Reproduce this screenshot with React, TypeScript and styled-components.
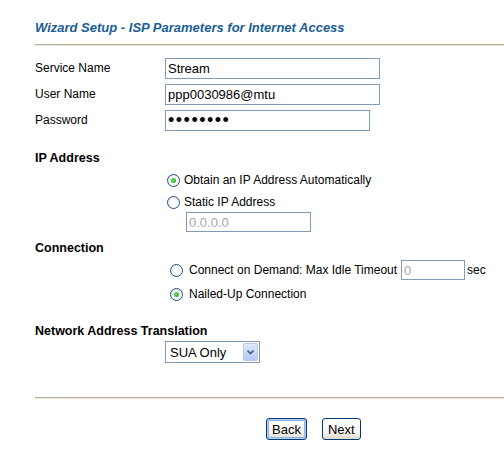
import React from 'react'
import styled, { createGlobalStyle } from 'styled-components'

const GlobalStyle = createGlobalStyle`
  html, body {
    margin: 0;
    padding: 0;
    background: #ffffff;
  }
  body {
    font-family: 'Liberation Sans', Arial, sans-serif;
    font-size: 12px;
    color: #000000;
  }
`

const Page = styled.div`
  width: 504px;
  height: 475px;
  padding-left: 35px;
  box-sizing: border-box;
  overflow: hidden;
`

const Title = styled.h1`
  margin: 0;
  padding-top: 20px;
  height: 24px;
  font-size: 13px;
  font-weight: bold;
  font-style: italic;
  color: #1b5d95;
  line-height: 16px;
`

const Rule = styled.div<{ $top: number }>`
  margin-top: ${(p) => p.$top}px;
  height: 1px;
  border-top: 1px solid #b3ad98;
  background: #ece9d8;
`

const FieldRow = styled.div`
  display: grid;
  grid-template-columns: 130px auto;
  align-items: center;
  height: 26px;
`

const Fields = styled.div`
  margin-top: 9px;
`

const Label = styled.span`
  font-size: 12px;
`

const TextBox = styled.input<{ $width: number }>`
  width: ${(p) => p.$width}px;
  height: 21px;
  box-sizing: border-box;
  border: 1px solid #7f9db9;
  padding: 0 2px;
  font-family: 'Liberation Sans', Arial, sans-serif;
  font-size: 13px;
  color: #000;
  outline: none;
  &:disabled {
    background: #ffffff;
    color: #a8a8a0;
  }
`

const PasswordBox = styled(TextBox)`
  font-size: 18px;
  letter-spacing: 1.5px;
`

const SectionHeading = styled.div<{ $top: number }>`
  margin-top: ${(p) => p.$top}px;
  height: 16px;
  line-height: 16px;
  font-weight: bold;
  font-size: 12.5px;
`

const OptionList = styled.div<{ $indent: number; $top: number; $gap: number }>`
  display: flex;
  flex-direction: column;
  gap: ${(p) => p.$gap}px;
  margin-top: ${(p) => p.$top}px;
  padding-left: ${(p) => p.$indent}px;
`

const Option = styled.label<{ $gap: number }>`
  display: flex;
  align-items: center;
  gap: ${(p) => p.$gap}px;
  height: 16px;
  font-size: 12px;
  white-space: nowrap;
`

const Radio = styled.input.attrs({ type: 'radio' })`
  appearance: none;
  margin: 0;
  width: 13px;
  height: 13px;
  border-radius: 50%;
  border: 1px solid #1c5180;
  box-sizing: border-box;
  background: radial-gradient(circle at 65% 65%, #ffffff 0%, #ffffff 40%, #dcdad0 100%);
  display: grid;
  place-items: center;
  &:checked::after {
    content: '';
    width: 5px;
    height: 5px;
    border-radius: 50%;
    background: radial-gradient(circle at 40% 40%, #5ee25e, #21a121);
  }
`

const SubField = styled.div`
  margin-top: 2px;
  padding-left: 151px;
`

const SmallBox = styled(TextBox)<{ $gapLeft?: number }>`
  height: 20px;
  margin: 0 2px 0 ${(p) => p.$gapLeft ?? 0}px;
`

const DemandRow = styled.div`
  display: flex;
  align-items: center;
  height: 20px;
  margin-top: -2px;
  margin-bottom: -2px;
`

const SelectWrap = styled.div`
  margin-top: 2px;
  margin-left: 130px;
  width: 95px;
  height: 22px;
  box-sizing: border-box;
  border: 1px solid #7f9db9;
  display: flex;
  align-items: center;
  padding: 1px;
`

const SelectText = styled.span`
  flex: 1;
  padding-left: 3px;
  font-size: 13px;
`

const ArrowButton = styled.span`
  width: 15px;
  height: 18px;
  border-radius: 2px;
  border: 1px solid #b9c9ef;
  box-sizing: border-box;
  background: linear-gradient(#e1e9fc, #b4c8f6);
  display: flex;
  align-items: center;
  justify-content: center;
`

const ButtonBar = styled.div`
  display: flex;
  gap: 15px;
  margin-top: 19px;
  padding-left: 231px;
`

const XpButton = styled.button<{ $isDefault?: boolean }>`
  height: 22px;
  padding: 0 5px;
  border: 1px solid #003c74;
  border-radius: 3px;
  background: linear-gradient(#ffffff, #f4f3ee 70%, #dcd8c8);
  font-family: 'Liberation Sans', Arial, sans-serif;
  font-size: 13px;
  color: #000;
  box-shadow: ${(p) =>
    p.$isDefault ? 'inset 0 0 0 1px #b6cdf6, inset 0 0 0 2px #8eb2ef' : 'none'};
`

const ChevronDown = () => (
  <svg width="7" height="5" viewBox="0 0 7 5">
    <path d="M0.5 0.5 L3.5 3.5 L6.5 0.5" fill="none" stroke="#4d6185" strokeWidth="1.6" />
  </svg>
)

export default function App() {
  return (
    <Page>
      <GlobalStyle />
      <Title>Wizard Setup - ISP Parameters for Internet Access</Title>
      <Rule $top={0} />

      <Fields>
        <FieldRow>
          <Label>Service Name</Label>
          <TextBox $width={215} defaultValue="Stream" />
        </FieldRow>
        <FieldRow>
          <Label>User Name</Label>
          <TextBox $width={215} defaultValue="ppp0030986@mtu" />
        </FieldRow>
        <FieldRow>
          <Label>Password</Label>
          <PasswordBox $width={205} type="password" defaultValue="secretpw" />
        </FieldRow>
      </Fields>

      <SectionHeading $top={17}>IP Address</SectionHeading>
      <OptionList $indent={132} $top={6} $gap={6}>
        <Option $gap={4}>
          <Radio name="ip" defaultChecked />
          Obtain an IP Address Automatically
        </Option>
        <Option $gap={4}>
          <Radio name="ip" />
          Static IP Address
        </Option>
      </OptionList>
      <SubField>
        <SmallBox $width={125} disabled defaultValue="0.0.0.0" />
      </SubField>

      <SectionHeading $top={8}>Connection</SectionHeading>
      <OptionList $indent={135} $top={6} $gap={8}>
        <DemandRow>
          <Option $gap={6}>
            <Radio name="conn" />
            Connect on Demand: Max Idle Timeout
          </Option>
          <SmallBox $width={64} $gapLeft={4} disabled defaultValue="0" />
          sec
        </DemandRow>
        <Option $gap={6}>
          <Radio name="conn" defaultChecked />
          Nailed-Up Connection
        </Option>
      </OptionList>

      <SectionHeading $top={21}>Network Address Translation</SectionHeading>
      <SelectWrap>
        <SelectText>SUA Only</SelectText>
        <ArrowButton>
          <ChevronDown />
        </ArrowButton>
      </SelectWrap>

      <Rule $top={34} />

      <ButtonBar>
        <XpButton $isDefault>Back</XpButton>
        <XpButton>Next</XpButton>
      </ButtonBar>
    </Page>
  )
}
